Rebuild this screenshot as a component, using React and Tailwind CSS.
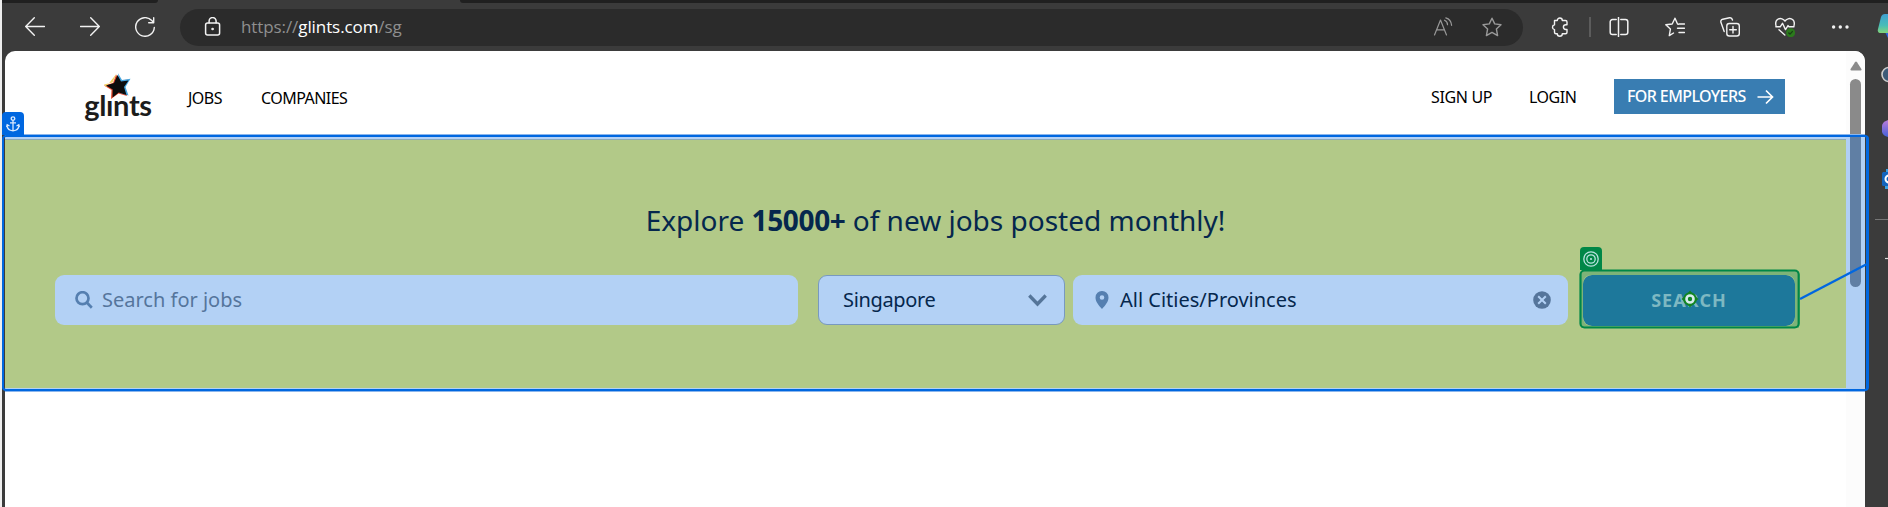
import React from 'react';

const Icon = ({ children, className = '', size = 20, sw = 1.2 }) => (
  <svg
    width={size}
    height={size}
    viewBox="0 0 20 20"
    fill="none"
    stroke="currentColor"
    strokeWidth={sw}
    strokeLinecap="round"
    strokeLinejoin="round"
    className={`shrink-0 ${className}`}
  >
    {children}
  </svg>
);

const STAR = 'M10 1.2 12.7 6.9 19 7.7 14.4 12 15.6 18.6 10 15.4 4.4 18.6 5.6 12 1 7.7 7.3 6.9Z';

function Toolbar() {
  return (
    <div className="flex h-12 items-center text-[#f2f2f2]">
      <Icon className="ml-[23px]" sw={1.4}><path d="M19.5 9.500H.7M9.300.8.7 9.500l8.600 8.700" /></Icon>
      <Icon className="ml-[35px]" sw={1.4}><path d="M.5 9.500h18.800M10.700.8 19.300 9.500l-8.600 8.700" /></Icon>
      <Icon className="ml-[35px]" sw={1.4}><path d="M19.300 10.500A9.300 9.300 0 1 1 16.800 3.600l1.700 1.800M18.700.8v5h-5" /></Icon>
      <div className="ml-[25px] flex h-[37px] w-[1343px] items-center rounded-full bg-[#2b2b2b]">
        <Icon className="ml-[23px]" sw={1.5}>
          <rect x="2.600" y="6" width="14" height="12" rx="2" />
          <path d="M6.100 5.800V4a3.500 3.500 0 0 1 7 0v1.800" />
          <circle cx="9.600" cy="12" r=".6" />
        </Icon>
        <div className="ml-[18px] w-[165px] whitespace-nowrap font-['Open_Sans','Noto_Sans',sans-serif] text-[17px] leading-6 tracking-[-0.09px] text-[#8f8f8f]">
          https://<span className="text-white">glints.com</span>/sg
        </div>
        <Icon className="ml-[1027px] text-[#999]">
          <path d="M1.500 18 7.500 3l6 15M3.600 12.800h7.800M11.500 3.200c2 .8 3 2.500 3 4.500M12.800.8c3.800 1 5.500 4 5.800 7.500" />
        </Icon>
        <Icon className="ml-[29px] text-[#999]" sw={1.4}><path d={STAR} /></Icon>
      </div>
      <Icon className="ml-[27px]" sw={1.4}>
        <path d="M4.500 3.500h2.800a2.500 2.500 0 0 1 5 0h3.200q1.500 0 1.500 1.500v2.700h-1.200a2.400 2.400 0 0 0 0 4.800H17v2.800q0 1.500-1.500 1.500h-3.200a2.500 2.500 0 0 1-5 0H6q-1.500 0-1.500-1.500v-2.700a2.500 2.500 0 0 1 0-4.900Z" />
      </Icon>
      <div className="ml-[19px] h-5 w-[2px] bg-[#5c5c5c]" />
      <Icon className="ml-[18px]" sw={1.5}>
        <path d="M7.200 2.500H3.500a2.300 2.300 0 0 0-2.300 2.300v10.400a2.300 2.300 0 0 0 2.300 2.300h3.700M11.800 2.500h4.700a2.300 2.300 0 0 1 2.300 2.300v10.400a2.300 2.300 0 0 1-2.300 2.300h-4.700M9.500.5v19" />
      </Icon>
      <Icon className="ml-[36px]" sw={1.4}>
        <path d="M13.500 7.200 12.500 7 10 1.200 7.200 7 .8 7.700l4.600 4.400-1.100 6.500L8.500 16M14 7h5.500M12.500 11.200h7M14 15.500h5.500" />
      </Icon>
      <Icon className="ml-[35px]" sw={1.4}>
        <rect x="6.800" y="6.500" width="12.500" height="12.500" rx="2.500" />
        <path d="M13 9.500v6.500M9.700 12.800h6.600M4.200 14.500 1 5.500C.4 3.800 1.200 2.700 2.800 2.200L9.500.8c1.500-.3 2.600.5 3 2.200" />
      </Icon>
      <Icon className="ml-[35px]" sw={1.4}>
        <path d="M1 8.500C-.4 3.500 3.500.7 7 1.800c1.400.5 2.300 1.300 3 2.200C10.700 3 11.600 2.200 13 1.800c3.500-1.100 7.400 1.700 6 6.700M.8 9.800h4.400l2.300-3.500 3 6.300 2.500-4 1 1.200h5M4 12.800 9.800 18" />
        <circle cx="15.600" cy="15.800" r="4.500" fill="#2b7a1c" stroke="none" />
        <path d="m13.800 15.900 1.200 1.200 2.300-2.500" stroke="#173f14" />
      </Icon>
      <Icon className="ml-[35px]">
        <g fill="currentColor" stroke="none">
          <circle cx="3.600" cy="10" r="1.700" /><circle cx="10.300" cy="10" r="1.700" /><circle cx="17" cy="10" r="1.700" />
        </g>
      </Icon>
    </div>
  );
}

function Logo() {
  return (
    <div className="flex w-[68px] flex-col items-center">
      <svg width="28" height="28" viewBox="1 -1 28 28" className="shrink-0">
        <defs>
          <filter id="soft"><feGaussianBlur stdDeviation=".45" /></filter>
        </defs>
        <g filter="url(#soft)" strokeLinejoin="round">
          <path d="M13 1.500 17 7.500 26 6.500 21 14 24 23 15.500 20.500 8 26 8.500 17 1 12.500 10 10Z" fill="#e8492b" />
          <path d="M13.500.8 9.500 9.500 1 11.500 3 14Z" fill="#f2ce62" />
          <path d="M15 .3 19 7 27.500 5.800 22.500 14 25.500 22.500 17 20Z" fill="#45a5df" />
          <path d="M14.500 2 18 8.600 25.500 7.500 21 14 23.500 22 15.800 19.500 9.500 24.500 9.700 16.500 3 12.500 11 10Z" fill="#0b0a0c" />
        </g>
      </svg>
      <div className="-mt-[12px] font-['Lato','Noto_Sans',sans-serif] text-[29px] font-bold leading-[34px] tracking-[-0.35px] text-[#1c1c1c]">glınts</div>
    </div>
  );
}

function Header() {
  return (
    <header className="flex h-[88px] items-start text-base leading-6 text-black">
      <div className="ml-[79px] mt-[21px]"><Logo /></div>
      <div className="ml-[36px] mt-[35px] w-[37px] whitespace-nowrap tracking-[-0.5px]">JOBS</div>
      <div className="ml-[36px] mt-[35px] w-[90px] whitespace-nowrap tracking-[-0.55px]">COMPANIES</div>
      <div className="ml-[1080px] mt-[34px] w-[62px] whitespace-nowrap tracking-[-0.35px]">SIGN UP</div>
      <div className="ml-[36px] mt-[34px] w-[50px] whitespace-nowrap tracking-[-0.5px]">LOGIN</div>
      <div className="ml-[35px] mt-[28px] flex h-[35px] w-[171px] items-center bg-[#397db2] pl-[13px] font-medium text-white">
        <span className="w-[121px] whitespace-nowrap pb-px tracking-[-0.6px]">FOR EMPLOYERS</span>
        <svg width="17" height="16" viewBox="0 0 17 16" fill="none" stroke="currentColor" strokeWidth="1.700" className="ml-[9px]">
          <path d="M.5 8h14.800M9 1.500 15.500 8 9 14.500" />
        </svg>
      </div>
    </header>
  );
}

function Hero() {
  return (
    <section className="h-[249px] w-[1841px] bg-[#b2c988] text-xl text-[#05274d]">
      <h1 className="pt-[60px] text-center text-[28px] leading-[42px]">
        <span className="inline-block translate-x-[10px] whitespace-nowrap">
          Explore <b className="font-bold tracking-[-0.35px]">15000+</b> of new jobs posted monthly!
        </span>
      </h1>
      <div className="mt-[34px] flex pl-[50px] leading-[50px]">
        <div className="flex h-[50px] w-[743px] items-center rounded-[9px] bg-[#b3d1f5] pl-5 text-[#55759c]">
          <svg width="18" height="18" viewBox="0 0 18 18" fill="none" stroke="#557fb0" strokeWidth="2.700">
            <circle cx="7.500" cy="7.200" r="6" /><path d="m11.800 11.500 5 5.200" />
          </svg>
          <span className="ml-[9px]">Search for jobs</span>
        </div>
        <div className="ml-5 flex h-[50px] w-[247px] items-center rounded-[9px] border border-[#7899bf] bg-[#b3d1f5] pl-6">
          <span className="w-[185px] tracking-[-0.35px]">Singapore</span>
          <svg width="19" height="13" viewBox="0 0 19 13" fill="none" stroke="#557599" strokeWidth="3.300">
            <path d="m1.300 1.500 8.200 8.500 8.200-8.500" />
          </svg>
        </div>
        <div className="ml-2 flex h-[50px] w-[495px] items-center rounded-[9px] bg-[#b3d1f5] pl-[22px]">
          <svg width="14" height="18" viewBox="0 0 14 18" fill="#557fb0" fillRule="evenodd">
            <path d="M7 0a6.400 6.400 0 0 1 6.500 6.400C13.500 10.500 10.500 14 7 18 3.500 14 .5 10.500.5 6.400A6.400 6.400 0 0 1 7 0Zm0 4.200a2.300 2.300 0 1 0 0 4.600 2.300 2.300 0 0 0 0-4.600Z" />
          </svg>
          <span className="ml-[11px] w-[413px]">All Cities/Provinces</span>
          <svg width="18" height="18" viewBox="0 0 18 18">
            <circle cx="9" cy="9" r="8.800" fill="#55759b" />
            <path d="m5.200 5.200 7.600 7.600m0-7.600-7.600 7.600" stroke="#b3d1f5" strokeWidth="2" />
          </svg>
        </div>
        <div className="ml-[15px] h-[51px] w-[212px] rounded-[9px] bg-[#1d789b] text-center text-lg font-bold leading-[51px] tracking-[1px] text-[#7eb8c2]">
          SEARCH
        </div>
      </div>
    </section>
  );
}

function Scrollbar() {
  return (
    <div className="flex w-[19px] flex-col items-center bg-[#fcfcfc] pt-[10px]">
      <svg width="12" height="10" viewBox="0 0 12 10"><path d="M5 1.200q1-1.300 2 0L11.400 8Q12 9.500 10.500 9.500h-9Q0 9.500.6 8Z" fill="#8a8a8a" /></svg>
      <div className="mt-[8px] h-[208px] w-[11px] rounded-full bg-[#8a8a8a]" />
    </div>
  );
}

function Sidebar() {
  return (
    <svg width="23" height="507" viewBox="1865 0 23 507" className="absolute right-0 top-0">
      <defs>
        <linearGradient id="cp" x1="0" y1="0" x2="0" y2="1"><stop stopColor="#3f9fd2" /><stop offset=".6" stopColor="#48bdb7" /><stop offset="1" stopColor="#83d479" /></linearGradient>
        <linearGradient id="pu" x1="0" y1="0" x2="0" y2="1"><stop stopColor="#bb7bd9" /><stop offset="1" stopColor="#4661d8" /></linearGradient>
      </defs>
      <path d="M1885 32h6v8q-3-1-4-4Z" fill="#2862df" />
      <path d="M1890 14h-5q-3 0-4 3l-3 12q-1 4 3 4h9Z" fill="url(#cp)" />
      <circle cx="1889" cy="74.500" r="7" fill="#3c5a78" stroke="#ccc" strokeWidth="1.600" />
      <path d="M1888 120q-6 2-6 6v6q1 4 6 5Z" fill="url(#pu)" />
      <path d="M1886 169h4v20h-5v-3h-2v-14h3Z" fill="#38a1e6" />
      <rect x="1882" y="172" width="10" height="14" rx="1.500" fill="#1264bd" />
      <circle cx="1889" cy="179" r="3.500" fill="none" stroke="white" strokeWidth="2" />
      <path d="M1875 219.500h13" stroke="#767676" />
      <path d="M1885 258.500h3" stroke="#ddd" strokeWidth="1.200" />
    </svg>
  );
}

function Annotations() {
  return (
    <>
      <div className="absolute left-[1846px] top-[137px] h-[252px] w-[19px] bg-[#0067e0]/30" />
      <div className="absolute left-[5px] top-[137px] h-[2px] w-[1841px] bg-[#b3d1f5]" />
      <div className="absolute left-[5px] top-[388px] h-[1px] w-[1841px] bg-[#b3d1f5]" />
      <div className="absolute left-[5px] top-[139px] h-px w-[1841px] bg-[#8ba9b8]" />
      <div className="absolute left-[5px] top-[134px] h-[1px] w-[1860px] bg-[#8bb6ec]" />
      <div className="absolute left-[5px] top-[391px] h-[1px] w-[1860px] bg-[#8bb6ec]" />
      <div className="absolute left-[2px] top-[135px] h-[256px] w-[1867px] rounded-[4px] border-2 border-r-3 border-[#0067e0]" />
      <div className="absolute left-[2px] top-[112px] flex h-[23px] w-[22px] items-center justify-center rounded-t-[4px] bg-[#0067e0]">
        <svg width="14" height="16" viewBox="0 0 14 16" fill="none" stroke="#dbeafe" strokeWidth="1.300">
          <circle cx="7" cy="2.600" r="1.800" />
          <path d="M7 4.500v10.300M4 6.800h6M1 8.800c0 3.500 2.500 5.800 6 6 3.500-.2 6-2.500 6-6M.5 11l.7-2.200L3.500 10M13.500 11l-.7-2.200L10.500 10" />
        </svg>
      </div>
      <svg width="222" height="61" viewBox="1579 269 222 61" className="absolute left-[1579px] top-[269px]">
        <path fillRule="evenodd" fill="#7db378" d="M1581 271h218v57h-218ZM1592 275q-9 0-9 9v33q0 9 9 9h194q9 0 9-9v-33q0-9-9-9Z" />
        <rect x="1580.500" y="270.500" width="218.200" height="57" rx="4" fill="none" stroke="#008747" strokeWidth="2.200" />
      </svg>
      <div className="absolute left-[1580px] top-[247px] flex h-[23px] w-[22px] items-center justify-center rounded-t-[4px] bg-[#008747]">
        <svg width="16" height="16" viewBox="0 0 16 16" fill="none" stroke="#b9e3e0" strokeWidth="1.300">
          <circle cx="8" cy="8" r="7.200" /><circle cx="8" cy="8" r="4.200" /><circle cx="8" cy="8" r="1.100" fill="#b9e3e0" stroke="none" />
        </svg>
      </div>
      <svg width="18" height="18" viewBox="0 0 18 18" className="absolute left-[1681px] top-[290px]">
        <path d="m9 .5 2.500 3h-5ZM9 17.500l-2.500-3h5ZM.5 9l3-2.500v5ZM17.500 9l-3-2.500v5Z" fill="#118522" />
        <circle cx="9" cy="9" r="5.800" fill="#d7ebee" stroke="#118522" strokeWidth="2" />
        <circle cx="9" cy="9" r="2.200" fill="#118522" />
      </svg>
      <svg width="72" height="42" viewBox="0 0 72 42" className="absolute left-[1798px] top-[260px]">
        <path d="M2 39 70 3.500" stroke="#0067e0" strokeWidth="2.400" />
      </svg>
    </>
  );
}

export default function App() {
  return (
    <div className="relative h-[507px] w-[1888px] overflow-hidden border-l-2 border-[#eee] bg-[#3b3b3b] font-['Noto_Sans',sans-serif]">
      <div className="flex h-[3px] justify-between">
        <div className="w-[156px] rounded-br bg-[#202020]" />
        <div className="w-[1428px] rounded-bl bg-[#202020]" />
      </div>
      <Toolbar />
      <main className="ml-[3px] flex h-[456px] w-[1860px] overflow-hidden rounded-t-[10px] bg-white">
        <div className="w-[1841px]">
          <Header />
          <Hero />
        </div>
        <Scrollbar />
      </main>
      <Sidebar />
      <div className="absolute -left-[2px] top-0">
        <Annotations />
      </div>
    </div>
  );
}
